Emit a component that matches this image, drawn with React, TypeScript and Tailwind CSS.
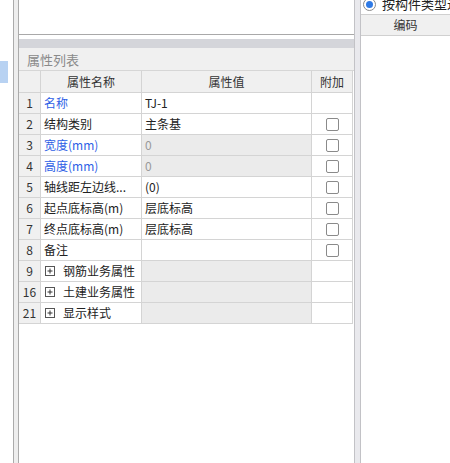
import React from "react"

type Row = {
  no: string
  name: string
  value?: string
  blue?: boolean
  grayValue?: boolean
  group?: boolean
  check?: boolean
}

const rows: Row[] = [
  { no: "1", name: "名称", value: "TJ-1", blue: true },
  { no: "2", name: "结构类别", value: "主条基", check: true },
  { no: "3", name: "宽度(mm)", value: "0", blue: true, grayValue: true, check: true },
  { no: "4", name: "高度(mm)", value: "0", blue: true, grayValue: true, check: true },
  { no: "5", name: "轴线距左边线...", value: "(0)", check: true },
  { no: "6", name: "起点底标高(m)", value: "层底标高", check: true },
  { no: "7", name: "终点底标高(m)", value: "层底标高", check: true },
  { no: "8", name: "备注", value: "", check: true },
  { no: "9", name: "钢筋业务属性", group: true },
  { no: "16", name: "土建业务属性", group: true },
  { no: "21", name: "显示样式", group: true },
]

function PlusBox() {
  return (
    <svg width="10" height="10" viewBox="0 0 10 10" className="shrink-0">
      <rect x="0.5" y="0.5" width="9" height="9" fill="white" stroke="#555" />
      <path d="M2.5 5h5M5 2.5v5" stroke="#333" strokeWidth="1" />
    </svg>
  )
}

function Checkbox() {
  return <div className="w-[13px] h-[13px] border border-[#8a8a8a] rounded-[2px] bg-white" />
}

export default function App() {
  return (
    <div
      className="flex w-[450px] h-[463px] bg-white overflow-hidden text-[12px] text-[#222]"
      style={{ fontFamily: '"Noto Sans CJK SC", "Noto Sans", sans-serif' }}
    >
      {/* left gutter */}
      <div className="w-[13px] shrink-0 pt-[61px]">
        <div className="w-[8px] h-[22px] bg-[#b8d2f2]" />
      </div>
      <div className="w-[6px] shrink-0 border-x border-[#ababab] bg-[#eeeeee]" />

      {/* main panel */}
      <div className="w-[335px] shrink-0 flex flex-col">
        <div className="h-[35px] border-b border-[#a9a9a9] bg-white" />
        <div className="h-[4px]" />
        <div className="h-[9px] bg-[#d4d5da]" />
        <div className="h-[23px] bg-[#f0f0f0] border-b border-[#d6d6d6] flex items-center pl-[8px] text-[13px] text-[#8a8a8a] leading-none">
          属性列表
        </div>

        <div className="w-[334px]">
          {/* header */}
          <div className="flex h-[22px] bg-[#f0f0f0] border-b border-[#d4d4d4] text-[#333]">
            <div className="w-[22px] border-r border-[#d4d4d4]" />
            <div className="w-[101px] border-r border-[#d4d4d4] flex items-center justify-center">属性名称</div>
            <div className="w-[170px] border-r border-[#d4d4d4] flex items-center justify-center">属性值</div>
            <div className="w-[41px] border-r border-[#d4d4d4] flex items-center justify-center">附加</div>
          </div>

          {rows.map((r) => (
            <div key={r.no} className="flex h-[21px] border-b border-[#d4d4d4]">
              <div className="w-[22px] border-r border-[#d4d4d4] bg-[#f0f0f0] flex items-center justify-center text-[#333]">
                {r.no}
              </div>
              <div
                className={
                  "w-[101px] border-r border-[#d4d4d4] flex items-center pl-[3px] whitespace-nowrap overflow-hidden " +
                  (r.blue ? "text-[#2e5fe6]" : "text-[#222]")
                }
              >
                {r.group ? (
                  <>
                    <span className="ml-[1px] mr-[8px] flex items-center">
                      <PlusBox />
                    </span>
                    {r.name}
                  </>
                ) : (
                  r.name
                )}
              </div>
              <div
                className={
                  "w-[170px] border-r border-[#d4d4d4] flex items-center pl-[3px] " +
                  (r.grayValue || r.group ? "bg-[#ebebeb] " : "") +
                  (r.grayValue ? "text-[#999]" : "text-[#222]")
                }
              >
                {r.value}
              </div>
              <div className="w-[41px] border-r border-[#d4d4d4] flex items-center justify-center">
                {r.check && <Checkbox />}
              </div>
            </div>
          ))}
        </div>
      </div>

      {/* splitter */}
      <div className="w-[7px] shrink-0 border-l border-[#c2c2c6] border-r border-[#b4b4bc] bg-[#e9e9ed]" />

      {/* right panel */}
      <div className="flex-1 flex flex-col min-w-0">
        <div className="h-[15px] border-b border-[#d0d0d0] overflow-hidden">
          <div className="flex items-center gap-[6px] pl-[2px] -mt-[4px] whitespace-nowrap">
            <div className="w-[13px] h-[13px] rounded-full border border-[#8a8a8a] bg-white flex items-center justify-center shrink-0">
              <div className="w-[7px] h-[7px] rounded-full bg-[#2f7ae5]" />
            </div>
            <span className="text-[13px] text-[#222] leading-[16px]">按构件类型过滤</span>
          </div>
        </div>
        <div className="h-[21px] bg-[#f0f0f0] border-b border-[#d0d0d0] flex items-center justify-center text-[#333]">
          编码
        </div>
      </div>
    </div>
  )
}
